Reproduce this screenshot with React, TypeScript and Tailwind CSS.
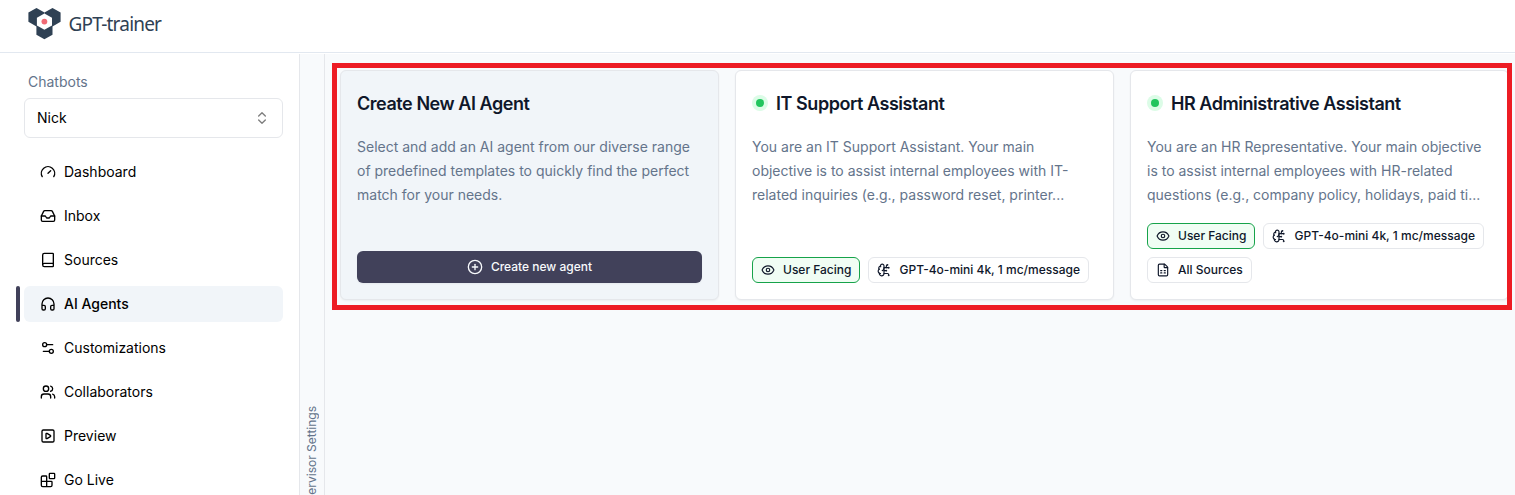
import React from "react";
import {
  Gauge, Inbox, Book, Headphones, Settings2, Users, SquarePlay, Blocks,
  ChevronsUpDown, CirclePlus, Eye, BrainCircuit, FileSpreadsheet,
} from "lucide-react";

const nav = [
  { label: "Dashboard", Icon: Gauge },
  { label: "Inbox", Icon: Inbox },
  { label: "Sources", Icon: Book },
  { label: "AI Agents", Icon: Headphones, active: true },
  { label: "Customizations", Icon: Settings2 },
  { label: "Collaborators", Icon: Users },
  { label: "Preview", Icon: SquarePlay },
  { label: "Go Live", Icon: Blocks },
];

function Logo() {
  return (
    <svg width="34" height="32" viewBox="0 0 34 32" className="shrink-0">
      <g fill="#2f4154">
        <path d="M8.5 0 16.5 4.6V14L8.5 18.4.4 13.8V4.6Z" />
        <path d="M24.5 0 32.6 4.6V13.8L24.5 18.4 16.4 14V4.6Z" />
        <path d="M16.4 13 24.5 17.4V26.8L16.4 31.3 8.4 26.8V17.4Z" />
      </g>
      <path d="M16.4 5.4 24 9.7V17.5L16.4 21.8 8.9 17.5V9.7Z" fill="#fff" />
      <circle cx="16.4" cy="13.6" r="2.9" fill="#f06a75" />
    </svg>
  );
}

function Tag({ Icon, children, green }: { Icon: React.ElementType; children: React.ReactNode; green?: boolean }) {
  return (
    <div className={`flex h-[26px] items-center gap-2 rounded-md border px-2 text-xs font-medium text-[#0f172a] ${green ? "border-[#16a34a] bg-[#f0fdf4]" : "border-[#e5e7eb] bg-white"}`}>
      <Icon size={14} className="shrink-0" />
      <span className="whitespace-nowrap">{children}</span>
    </div>
  );
}

function Body({ lines }: { lines: string[] }) {
  return (
    <p className="mt-4 text-sm leading-6 text-[#64748b]">
      {lines.map((l) => <span key={l} className="block whitespace-nowrap">{l}</span>)}
    </p>
  );
}

function Agent({ title, lines, children }: { title: string; lines: string[]; children: React.ReactNode }) {
  return (
    <article className="flex h-[230px] w-[379px] shrink-0 flex-col rounded-md border border-[#e5e7eb] bg-white p-4 shadow-xs">
      <div className="flex h-8 shrink-0 items-center gap-2">
        <span className="flex size-4 items-center justify-center rounded-full bg-[#dcfce7]">
          <span className="size-2 rounded-full bg-[#22c55e]" />
        </span>
        <h2 className="pt-0.5 text-lg leading-8 font-semibold tracking-tight text-[#0f172a]">{title}</h2>
      </div>
      <Body lines={lines} />
      <div className="mt-auto flex flex-wrap gap-2">{children}</div>
    </article>
  );
}

export default function App() {
  return (
    <div className="relative flex h-[495px] w-[1515px] flex-col overflow-hidden bg-white font-['Inter',sans-serif] text-black">
      <header className="flex h-[53px] shrink-0 items-start border-b border-[#e2e8f0] pt-2 pl-[27.5px]">
        <Logo />
        <span className="ml-[7px] font-['Noto_Sans',sans-serif] text-[19px] leading-8 tracking-[-0.042em] text-[#2f4154]">GPT-trainer</span>
      </header>
      <div className="flex min-h-0 flex-1 pt-px">
        <aside className="w-[300px] shrink-0 border-r border-[#e5e7eb] pt-[18px] pr-4 pl-6">
          <div className="pl-1 text-sm leading-5 text-[#64748b]">Chatbots</div>
          <div className="mt-1.5 flex h-10 items-center justify-between rounded-md border border-[#e5e7eb] px-3 text-sm">
            <span>Nick</span>
            <ChevronsUpDown size={16} className="opacity-50" />
          </div>
          <nav className="mt-4 flex flex-col gap-2">
            {nav.map(({ label, Icon, active }) => (
              <div key={label} className={active ? "-ml-2 flex gap-1" : "flex"}>
                {active && <span className="w-1 rounded-xs bg-[#41415a]" />}
                <div className={`flex h-9 flex-1 items-center gap-2 rounded-md pl-4 text-sm ${active ? "bg-[#f1f5f9] font-medium" : ""}`}>
                  <Icon size={16} />
                  <span>{label}</span>
                </div>
              </div>
            ))}
          </nav>
        </aside>
        <div className="flex w-[25px] shrink-0 justify-center overflow-hidden border-r border-[#e5e7eb] bg-[#f8fafc] pt-[352px]">
          <span className="h-max rotate-180 text-xs whitespace-nowrap text-[#64748b] [writing-mode:vertical-rl]">Supervisor Settings</span>
        </div>
        <main className="flex min-w-0 flex-1 items-start gap-4 overflow-hidden bg-[#f8fafc] pt-4 pl-[15px]">
          <article className="flex h-[230px] w-[379px] shrink-0 flex-col rounded-md border border-[#e5e7eb] bg-[#f1f5f9] p-4 shadow-xs">
            <h2 className="h-8 pt-px text-lg leading-8 font-semibold tracking-tight text-[#0f172a]">Create New AI Agent</h2>
            <Body lines={["Select and add an AI agent from our diverse range", "of predefined templates to quickly find the perfect", "match for your needs."]} />
            <button className="mt-auto flex h-8 items-center justify-center gap-2 rounded-md bg-[#41415a] text-xs font-medium text-[#f8fafc] shadow-xs">
              <CirclePlus size={16} />
              Create new agent
            </button>
          </article>
          <Agent title="IT Support Assistant" lines={["You are an IT Support Assistant. Your main", "objective is to assist internal employees with IT-", "related inquiries (e.g., password reset, printer..."]}>
            <Tag Icon={Eye} green>User Facing</Tag>
            <Tag Icon={BrainCircuit}>GPT-4o-mini 4k, 1 mc/message</Tag>
          </Agent>
          <Agent title="HR Administrative Assistant" lines={["You are an HR Representative. Your main objective", "is to assist internal employees with HR-related", "questions (e.g., company policy, holidays, paid ti..."]}>
            <Tag Icon={Eye} green>User Facing</Tag>
            <Tag Icon={BrainCircuit}>GPT-4o-mini 4k, 1 mc/message</Tag>
            <Tag Icon={FileSpreadsheet}>All Sources</Tag>
          </Agent>
        </main>
      </div>
      <div className="pointer-events-none absolute top-[63px] left-[332px] h-[247px] w-[1180px] border-5 border-[#ed1c24]" />
    </div>
  );
}
